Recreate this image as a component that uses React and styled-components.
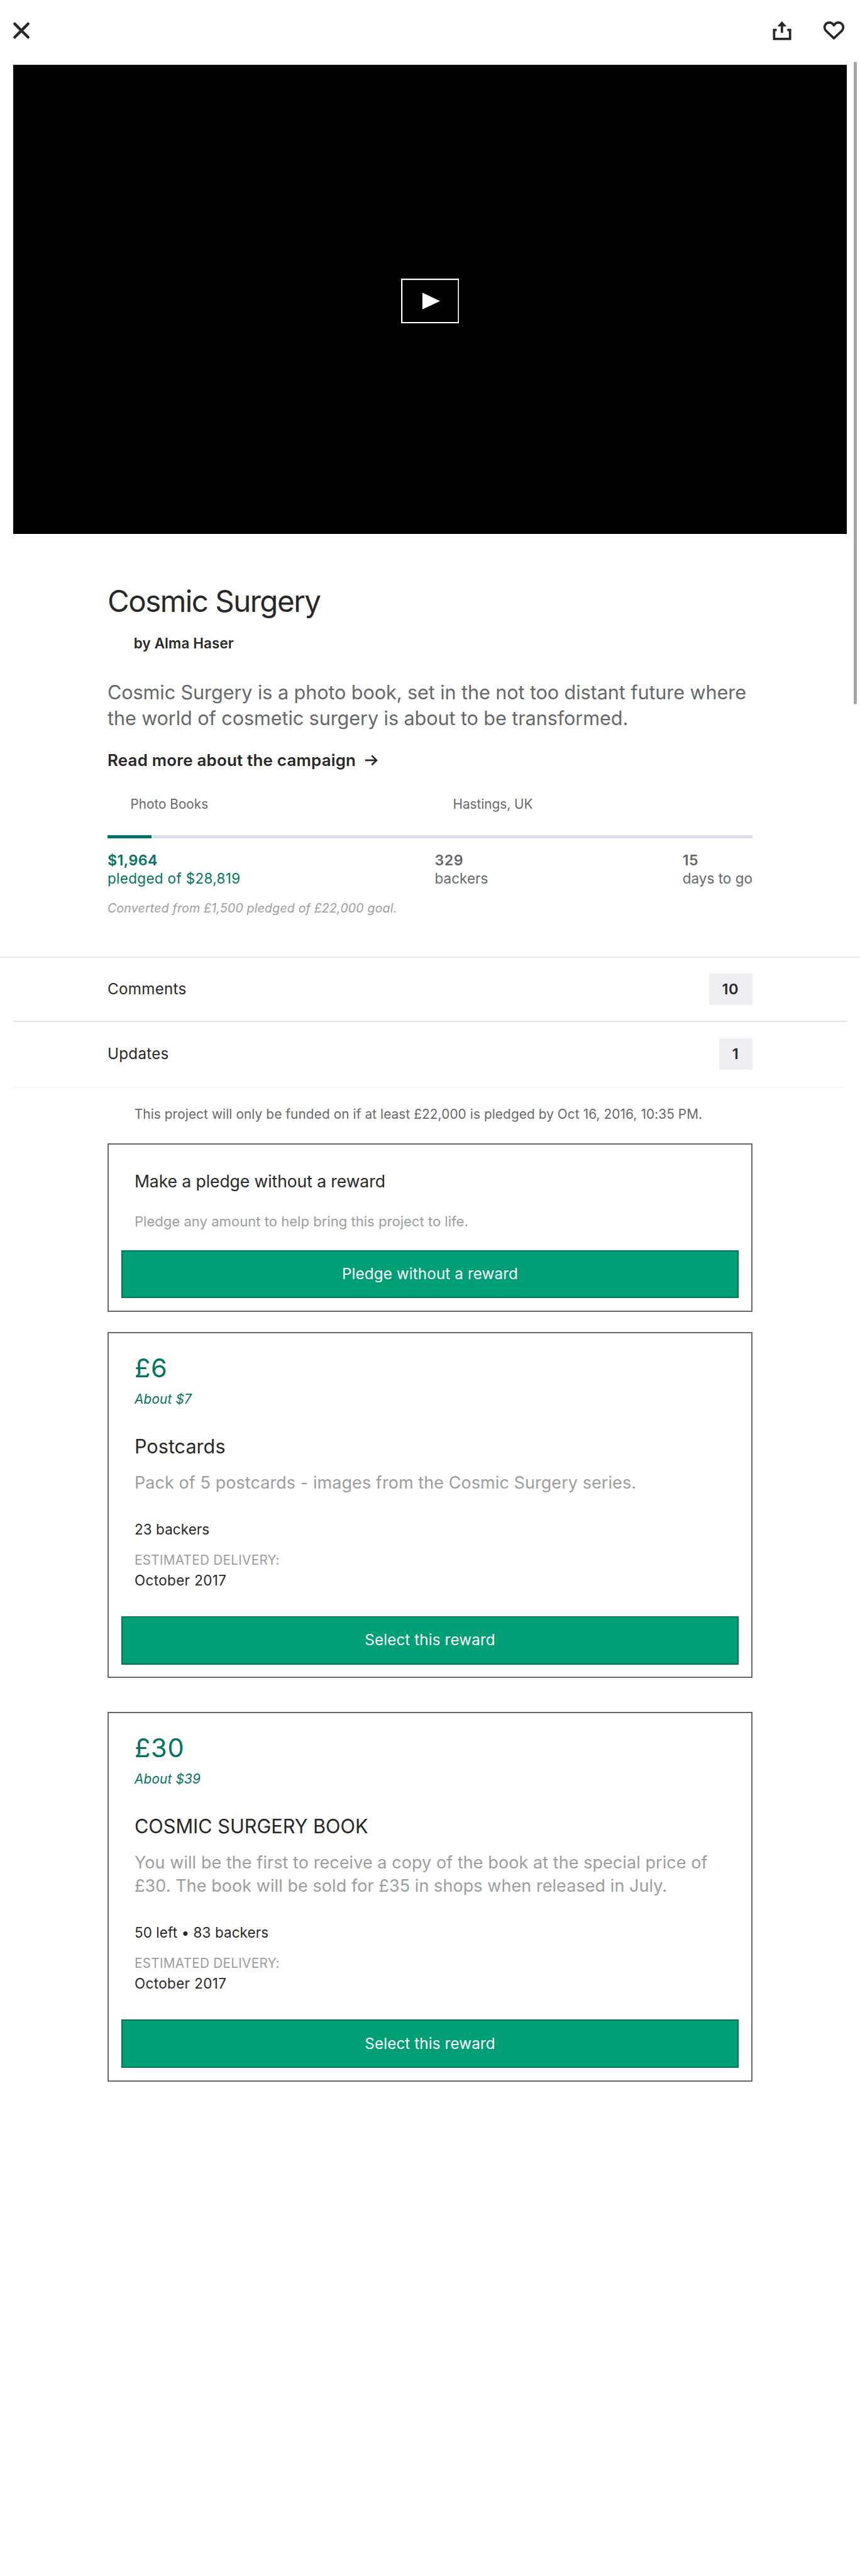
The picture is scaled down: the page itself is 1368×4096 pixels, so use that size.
import React from "react";
import styled, { createGlobalStyle, css } from "styled-components";

const UNIT = 0.890625;
const u = (n) => `${+(n * UNIT).toFixed(3)}px`;

const color = {
  ink: "#282828",
  slate: "#656969",
  mist: "#9b9e9e",
  green: "#009e74",
  deepGreen: "#037362",
  track: "#dcdee8",
  badge: "#eeedf2",
  rule: "#e6e6e6",
  ruleSoft: "#f5f5f5",
};

const type = (size, line, spacing = 0, weight = 400) => css`
  font-size: ${u(size)};
  line-height: ${u(line)};
  letter-spacing: ${spacing}px;
  font-weight: ${weight};
`;

const GlobalStyle = createGlobalStyle`
  *, *::before, *::after { box-sizing: border-box; }
  body {
    margin: 0;
    background: #fff;
    color: ${color.ink};
    font-family: Inter, "Liberation Sans", sans-serif;
  }
  h1, h2, p, ul { margin: 0; padding: 0; font-weight: 400; }
  button { font-family: inherit; padding: 0; margin: 0; background: none; border: 0; color: inherit; }
`;

const Page = styled.div`
  position: relative;
  width: ${u(1536)};
  height: ${u(4600)};
  overflow: hidden;
  white-space: nowrap;
`;

const Toolbar = styled.header`
  display: flex;
  align-items: center;
  justify-content: space-between;
  height: ${u(116)};
  padding: 0 ${u(24)} ${u(8)} ${u(20)};
`;

const ToolbarActions = styled.div`
  display: flex;
  gap: ${u(50)};
`;

const IconButton = styled.button`
  display: flex;
  width: ${(p) => u(p.$width || 40)};
  height: ${u(44)};
  svg { width: 100%; height: 100%; display: block; }
`;

const Video = styled.section`
  display: flex;
  align-items: center;
  justify-content: center;
  height: ${u(837)};
  margin: 0 ${u(24)};
  padding-bottom: ${u(0)};
  background: #000;
`;

const PlayButton = styled.button`
  display: flex;
  width: ${u(104)};
  height: ${u(80)};
  margin-bottom: ${u(-5)};
  svg { width: 100%; height: 100%; display: block; }
`;

const Summary = styled.section`
  display: flex;
  flex-direction: column;
  padding: ${u(88.3)} ${u(192)} ${u(72.9)};
`;

const Title = styled.h1`
  ${type(53.3, 64, -1.5)}
`;

const Author = styled.p`
  ${type(25.2, 32, 0.12, 600)}
  margin-top: ${u(27.2)};
  padding-left: ${u(47)};
`;

const Blurb = styled.p`
  ${type(34.4, 46, -0.1)}
  margin-top: ${u(49.7)};
  color: ${color.slate};
`;

const ReadMore = styled.a`
  ${type(29.1, 36, 0.21, 600)}
  display: flex;
  align-items: center;
  gap: ${u(16)};
  margin-top: ${u(32.9)};
  svg { width: ${u(24)}; height: ${u(20)}; margin-top: ${u(1)}; }
`;

const MetaRow = styled.div`
  ${type(23.3, 28)}
  display: grid;
  grid-template-columns: 1fr 1fr;
  margin-top: ${u(47.1)};
  color: ${color.slate};
`;

const MetaItem = styled.span`
  padding-left: ${u(41)};
`;

const Track = styled.div`
  height: ${u(6)};
  margin-top: ${u(40.8)};
  background: ${color.track};
`;

const Progress = styled.div`
  height: 100%;
  background: ${color.deepGreen};
`;

const Stats = styled.div`
  display: flex;
  justify-content: space-between;
  margin-top: ${u(23.7)};
`;

const Stat = styled.div`
  display: flex;
  flex-direction: column;
  color: ${(p) => (p.$highlight ? color.deepGreen : color.slate)};
`;

const StatValue = styled.span`
  ${type(26.1, 32, 0.45, 600)}
`;

const StatLabel = styled.span`
  ${type(25.2, 32, 0.1)}
  letter-spacing: ${(p) => (p.$wide ? 0.34 : 0.05)}px;
`;

const Conversion = styled.p`
  ${type(21.8, 26, 0.25)}
  margin-top: ${u(24.4)};
  font-style: italic;
  color: ${color.mist};
`;

const LinkList = styled.nav`
  display: flex;
  flex-direction: column;
  border-top: 2px solid ${color.rule};
`;

const LinkRow = styled.a`
  ${type(27.2, 34, 0.25)}
  display: flex;
  align-items: center;
  justify-content: space-between;
  height: ${(p) => u(p.$height)};
  margin: 0 ${(p) => u(p.$last ? 26 : 24)} 0 ${u(24)};
  padding: 0 ${(p) => u(p.$last ? 166 : 168)} 0 ${u(168)};
  border-bottom: 2px solid ${(p) => (p.$last ? color.ruleSoft : color.rule)};
`;

const Badge = styled.span`
  ${type(26.4, 56, 0.6, 600)}
  padding: 0 ${u(24.5)} 0 ${u(23.5)};
  background: ${color.badge};
`;

const Pledges = styled.section`
  display: flex;
  flex-direction: column;
  padding: ${u(34.5)} ${u(192)} 0;
`;

const Notice = styled.p`
  ${type(23.3, 28, 0.115)}
  padding-left: ${u(48)};
  color: ${color.slate};
`;

const Card = styled.article`
  display: flex;
  flex-direction: column;
  height: ${(p) => u(p.$height)};
  margin-top: ${(p) => u(p.$gap)};
  padding: ${(p) => u(p.$top)} ${u(22)} ${u(22)};
  border: 2px solid ${color.slate};
`;

const CardBody = styled.div`
  display: flex;
  flex-direction: column;
  padding-left: ${u(24)};
`;

const PlainTitle = styled.h2`
  ${type(29.8, 36, -0.08)}
`;

const PlainText = styled.p`
  ${type(24.8, 32)}
  margin-top: ${u(38.1)};
  color: ${color.mist};
`;

const Amount = styled.p`
  ${type(46.6, 56, 0.8)}
  color: ${color.deepGreen};
`;

const Approx = styled.p`
  ${type(23.3, 28, 0.2)}
  margin-top: ${u(13.5)};
  font-style: italic;
  color: ${color.deepGreen};
`;

const RewardTitle = styled.h2`
  ${type(34.4, 42)}
  margin-top: ${u(49)};
`;

const RewardText = styled.p`
  ${type(30.3, 42, 0.08)}
  margin-top: ${u(22.5)};
  color: ${color.mist};
`;

const Backers = styled.p`
  ${type(25.2, 32, 0.09)}
  margin-top: ${u(46.8)};
`;

const DeliveryLabel = styled.p`
  ${type(23.3, 28, 0.26)}
  margin-top: ${u(25)};
  color: ${color.mist};
`;

const DeliveryDate = styled.p`
  ${type(25.2, 32, 0.38)}
  margin-top: ${u(6.3)};
`;

const PledgeButton = styled.button`
  ${type(27.2, 34, 0.12)}
  height: ${u(86)};
  margin-top: auto;
  border: 2px solid ${color.deepGreen};
  background: ${color.green};
  color: #fff;
`;

const ScrollThumb = styled.div`
  position: absolute;
  top: ${u(110)};
  right: ${u(6)};
  width: ${u(5)};
  height: ${u(1148)};
  border-radius: ${u(3)};
  background: #a5a5a5;
`;

const CloseIcon = () => (
  <svg viewBox="0 0 40 44" fill="none" stroke={color.ink} strokeWidth="5" strokeLinecap="round">
    <path d="M6 10 30 34M30 10 6 34" />
  </svg>
);

const ShareIcon = () => (
  <svg viewBox="0 0 40 44">
    <path d="M10.7 21H6v16h28.500V21H29.500" fill="none" stroke={color.ink} strokeWidth="4.200" />
    <path d="M20 5.300 28.200 14.500H22.100V26H17.900V14.500H11.800Z" fill={color.ink} />
  </svg>
);

const HeartIcon = () => (
  <svg viewBox="0 0 40 44" fill="none" stroke={color.ink} strokeWidth="4.200" strokeLinejoin="round">
    <path d="M20 35.700 5.800 22.300C2.900 19.300 2.400 14.400 5 11.100 8.500 6.500 15.500 6.700 18.600 10.800L20 12.700 21.400 10.800C24.500 6.700 31.500 6.500 35 11.100 37.600 14.400 37.100 19.300 34.200 22.300Z" />
  </svg>
);

const PlayIcon = () => (
  <svg viewBox="0 0 104 80">
    <rect x="1.250" y="1.250" width="101.500" height="77.500" fill="none" stroke="#fff" strokeWidth="2.500" />
    <path d="M38 25v30l31.500-15z" fill="#fff" />
  </svg>
);

const ArrowIcon = () => (
  <svg viewBox="0 0 24 20" fill="none" stroke={color.ink} strokeWidth="3">
    <path d="M1 10H21.500M12.800 1.700 21.300 10 12.800 18.300" />
  </svg>
);

const links = [
  { label: "Comments", count: 10, height: 114 },
  { label: "Updates", count: 1, height: 118, last: true },
];

const rewards = [
  {
    amount: "£6",
    approx: "About $7",
    title: "Postcards",
    lines: ["Pack of 5 postcards - images from the Cosmic Surgery series."],
    backers: "23 backers",
    height: 618,
    gap: 36,
  },
  {
    amount: "£30",
    approx: "About $39",
    title: "COSMIC SURGERY BOOK",
    lines: [
      "You will be the first to receive a copy of the book at the special price of",
      "£30. The book will be sold for £35 in shops when released in July.",
    ],
    backers: "50 left • 83 backers",
    height: 660,
    gap: 60,
  },
];

const Lines = ({ lines }) =>
  lines.map((line, i) => (
    <React.Fragment key={line}>
      {i > 0 && <br />}
      {line}
    </React.Fragment>
  ));

const Reward = ({ reward }) => (
  <Card $height={reward.height} $gap={reward.gap} $top={34.7}>
    <CardBody>
      <Amount>{reward.amount}</Amount>
      <Approx>{reward.approx}</Approx>
      <RewardTitle>{reward.title}</RewardTitle>
      <RewardText>
        <Lines lines={reward.lines} />
      </RewardText>
      <Backers>{reward.backers}</Backers>
      <DeliveryLabel>ESTIMATED DELIVERY:</DeliveryLabel>
      <DeliveryDate>October 2017</DeliveryDate>
    </CardBody>
    <PledgeButton>Select this reward</PledgeButton>
  </Card>
);

export default function App() {
  const funded = (1964 / 28819) * 100;
  return (
    <>
      <GlobalStyle />
      <Page>
        <Toolbar>
          <IconButton aria-label="Close">
            <CloseIcon />
          </IconButton>
          <ToolbarActions>
            <IconButton aria-label="Share">
              <ShareIcon />
            </IconButton>
            <IconButton aria-label="Save" $width={46}>
              <HeartIcon />
            </IconButton>
          </ToolbarActions>
        </Toolbar>
        <Video>
          <PlayButton aria-label="Play">
            <PlayIcon />
          </PlayButton>
        </Video>
        <Summary>
          <Title>Cosmic Surgery</Title>
          <Author>by Alma Haser</Author>
          <Blurb>
            <Lines
              lines={[
                "Cosmic Surgery is a photo book, set in the not too distant future where",
                "the world of cosmetic surgery is about to be transformed.",
              ]}
            />
          </Blurb>
          <ReadMore>
            Read more about the campaign
            <ArrowIcon />
          </ReadMore>
          <MetaRow>
            <MetaItem>Photo Books</MetaItem>
            <MetaItem>Hastings, UK</MetaItem>
          </MetaRow>
          <Track>
            <Progress style={{ width: `${funded}%` }} />
          </Track>
          <Stats>
            <Stat $highlight>
              <StatValue>$1,964</StatValue>
              <StatLabel $wide>pledged of $28,819</StatLabel>
            </Stat>
            <Stat>
              <StatValue>329</StatValue>
              <StatLabel>backers</StatLabel>
            </Stat>
            <Stat>
              <StatValue>15</StatValue>
              <StatLabel>days to go</StatLabel>
            </Stat>
          </Stats>
          <Conversion>Converted from £1,500 pledged of £22,000 goal.</Conversion>
        </Summary>
        <LinkList>
          {links.map((link) => (
            <LinkRow key={link.label} $height={link.height} $last={link.last}>
              {link.label}
              <Badge>{link.count}</Badge>
            </LinkRow>
          ))}
        </LinkList>
        <Pledges>
          <Notice>
            This project will only be funded on if at least £22,000 is pledged by Oct 16, 2016, 10:35 PM.
          </Notice>
          <Card $height={301} $gap={36.5} $top={47.2}>
            <CardBody>
              <PlainTitle>Make a pledge without a reward</PlainTitle>
              <PlainText>Pledge any amount to help bring this project to life.</PlainText>
            </CardBody>
            <PledgeButton>Pledge without a reward</PledgeButton>
          </Card>
          {rewards.map((reward) => (
            <Reward key={reward.amount} reward={reward} />
          ))}
        </Pledges>
        <ScrollThumb />
      </Page>
    </>
  );
}
